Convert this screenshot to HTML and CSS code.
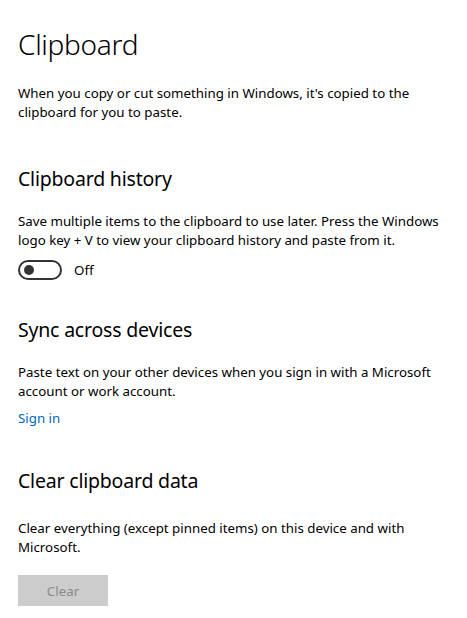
FILE: index.html
```html
<!DOCTYPE html>
<html lang="en">
<head>
<meta charset="utf-8">
<title>Clipboard</title>
<link rel="stylesheet" href="styles.css">
</head>
<body>
<main class="page">
  <h1 class="page-title">Clipboard</h1>
  <p class="desc intro">When you copy or cut something in Windows, it's copied to the clipboard for you to paste.</p>

  <section class="group">
    <h2 class="group-title">Clipboard history</h2>
    <p class="desc">Save multiple items to the clipboard to use later. Press the Windows logo key + V to view your clipboard history and paste from it.</p>
    <div class="toggle-row">
      <span class="toggle"><span class="thumb"></span></span>
      <span class="toggle-label">Off</span>
    </div>
  </section>

  <section class="group group-sync">
    <h2 class="group-title">Sync across devices</h2>
    <p class="desc">Paste text on your other devices when you sign in with a Microsoft account or work account.</p>
    <a class="link" href="#">Sign in</a>
  </section>

  <section class="group group-clear">
    <h2 class="group-title">Clear clipboard data</h2>
    <p class="desc">Clear everything (except pinned items) on this device and with Microsoft.</p>
    <button class="btn" disabled>Clear</button>
  </section>
</main>
</body>
</html>
```

FILE: styles.css
```css
html, body {
  margin: 0;
  padding: 0;
  background: #ffffff;
}
body {
  font-family: "Noto Sans", "Open Sans", sans-serif;
  color: #000000;
}
.page {
  padding: 24px 18px 0 18px;
  display: flex;
  flex-direction: column;
}
.page-title {
  margin: 0;
  font-size: 28px;
  font-weight: 300;
  line-height: 40px;
  letter-spacing: -0.3px;
}
.desc {
  margin: 0;
  font-size: 13.3px;
  line-height: 19px;
  max-width: 424px;
}
.intro {
  margin-top: 20px;
}
.group {
  display: flex;
  flex-direction: column;
  align-items: flex-start;
  margin-top: 43px;
}
.group-sync {
  margin-top: 36px;
}
.group-clear {
  margin-top: 39px;
}
.group-title {
  margin: 0 0 19px 0;
  font-size: 19.5px;
  font-weight: 400;
  line-height: 28px;
  letter-spacing: -0.2px;
}
.group-clear .group-title {
  margin-bottom: 24px;
}
.toggle-row {
  display: flex;
  align-items: center;
  gap: 12px;
  margin-top: 10px;
}
.toggle {
  box-sizing: border-box;
  width: 44px;
  height: 20px;
  border: 2px solid #333333;
  border-radius: 10px;
  display: flex;
  align-items: center;
  padding-left: 4px;
}
.thumb {
  width: 10px;
  height: 10px;
  border-radius: 50%;
  background: #333333;
}
.toggle-label {
  font-size: 13.3px;
  line-height: 19px;
}
.link {
  margin-top: 8px;
  font-size: 13.3px;
  line-height: 19px;
  color: #0067c0;
  text-decoration: none;
}
.btn {
  margin-top: 18px;
  width: 90px;
  height: 31px;
  border: none;
  background: #cccccc;
  color: #8a8a8a;
  font-family: inherit;
  font-size: 13.3px;
  padding: 0;
}
```
